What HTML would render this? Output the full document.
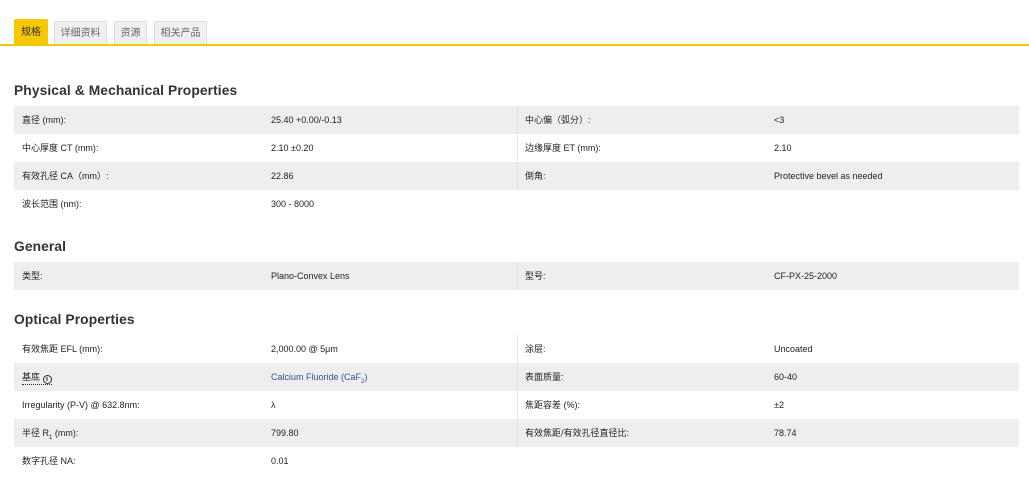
<!DOCTYPE html>
<html><head><meta charset="utf-8"><style>
*{margin:0;padding:0;box-sizing:border-box}
body{width:1029px;height:493px;background:#fff;font-family:"Liberation Sans","Noto Sans CJK SC",sans-serif;color:#333;position:relative;overflow:hidden}
.tab{position:absolute;top:21px;height:23px;font-size:10px;line-height:23px;text-align:center;background:#f0f0f0;border:1px solid #ddd;border-bottom:none;color:#666;border-radius:2px 2px 0 0}
.tab.on{background:#f5c800;border-color:#f5c800;color:#333;top:19px;height:25px;line-height:25px}
.line{position:absolute;left:0;top:44px;width:1029px;height:2px;background:#f5c800}
h2{position:absolute;left:14px;font-size:13.8px;font-weight:bold;color:#333;letter-spacing:.1px}
.row{position:absolute;left:14px;width:1005px;height:28px;font-size:9px;line-height:28px;color:#222}
.g{background:#eee}
.row span{position:absolute;top:0}
.c1{left:8px}.c2{left:257px}.c3{left:511px}.c4{left:760px}
.sep{position:absolute;left:503px;top:0;width:1px;height:28px;background:#e2e2e2}
a{color:#2a5599;text-decoration:none}
sub{font-size:6px;line-height:0}
</style></head><body>
<div class="tab on" style="left:14px;width:34px">规格</div>
<div class="tab" style="left:54px;width:53px">详细资料</div>
<div class="tab" style="left:114px;width:33px">资源</div>
<div class="tab" style="left:154px;width:53px">相关产品</div>
<div class="line"></div>

<h2 style="top:83px">Physical &amp; Mechanical Properties</h2>
<div class="row g" style="top:106px"><span class="c1">直径 (mm):</span><span class="c2">25.40 +0.00/-0.13</span><div class="sep"></div><span class="c3">中心偏（弧分）:</span><span class="c4">&lt;3</span></div>
<div class="row" style="top:134px"><span class="c1">中心厚度 CT (mm):</span><span class="c2">2.10 ±0.20</span><div class="sep"></div><span class="c3">边缘厚度 ET (mm):</span><span class="c4">2.10</span></div>
<div class="row g" style="top:162px"><span class="c1">有效孔径 CA（mm）:</span><span class="c2">22.86</span><div class="sep"></div><span class="c3">倒角:</span><span class="c4">Protective bevel as needed</span></div>
<div class="row" style="top:190px;width:503px"><span class="c1">波长范围 (nm):</span><span class="c2">300 - 8000</span></div>

<h2 style="top:239px">General</h2>
<div class="row g" style="top:262px"><span class="c1">类型:</span><span class="c2">Plano-Convex Lens</span><div class="sep"></div><span class="c3">型号:</span><span class="c4">CF-PX-25-2000</span></div>

<h2 style="top:312px">Optical Properties</h2>
<div class="row" style="top:335px"><span class="c1">有效焦距 EFL (mm):</span><span class="c2">2,000.00 @ 5μm</span><div class="sep"></div><span class="c3">涂层:</span><span class="c4">Uncoated</span></div>
<div class="row g" style="top:363px"><span class="c1" style="border-bottom:1px dotted #333;line-height:14px;top:7px">基底 <b style="display:inline-block;width:9px;height:9px;border:1.3px solid #333;border-radius:50%;font-size:7px;line-height:7px;text-align:center;vertical-align:-1px">i</b></span><span class="c2"><a>Calcium Fluoride (CaF<sub>2</sub>)</a></span><div class="sep"></div><span class="c3">表面质量:</span><span class="c4">60-40</span></div>
<div class="row" style="top:391px"><span class="c1">Irregularity (P-V) @ 632.8nm:</span><span class="c2">λ</span><div class="sep"></div><span class="c3">焦距容差 (%):</span><span class="c4">±2</span></div>
<div class="row g" style="top:419px"><span class="c1">半径 R<sub>1</sub> (mm):</span><span class="c2">799.80</span><div class="sep"></div><span class="c3">有效焦距/有效孔径直径比:</span><span class="c4">78.74</span></div>
<div class="row" style="top:447px;width:503px"><span class="c1">数字孔径 NA:</span><span class="c2">0.01</span></div>
</body></html>
